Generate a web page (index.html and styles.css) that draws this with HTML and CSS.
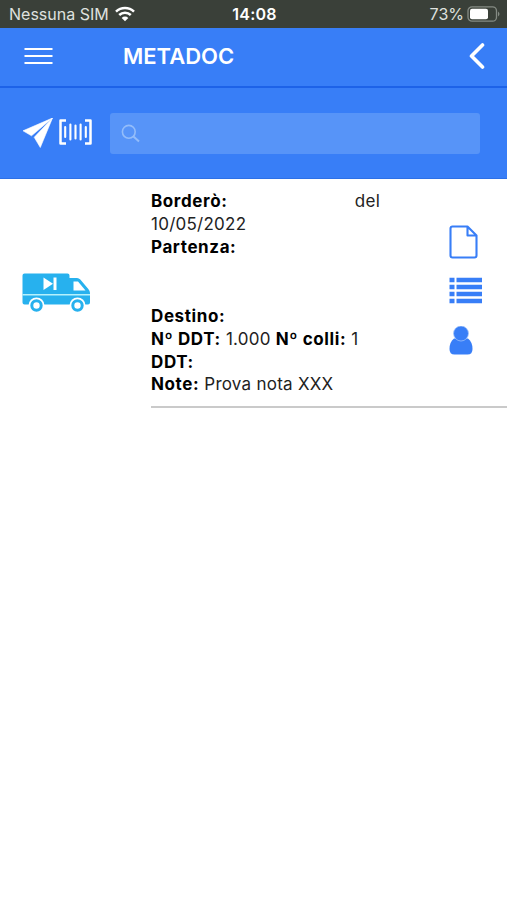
FILE: index.html
```html
<!DOCTYPE html>
<html lang="it">
<head>
  <meta charset="UTF-8" />
  <meta name="viewport" content="width=device-width, initial-scale=1.0"/>
  <title>METADOC</title>
  <link rel="stylesheet" href="styles.css">
</head>
<body>
  <div class="status-bar">
    <div class="carrier">
      <span>Nessuna SIM</span>
      <svg class="wifi" width="20" height="16" viewBox="0 0 20 16">
        <path d="M1 5.600a13 13 0 0 1 18 0M4.200 9a8.400 8.400 0 0 1 11.600 0" fill="none" stroke="#fff" stroke-width="2.500"/>
        <path d="M10 15.200l-3.300-3.300a4.700 4.700 0 0 1 6.600 0z" fill="#fff"/>
      </svg>
    </div>
    <div class="time">14:08</div>
    <div class="battery">
      <span>73%</span>
      <svg width="33" height="16" viewBox="0 0 33 16">
        <rect x="1" y=".8" width="28.500" height="14.400" rx="4" fill="none" stroke="#858b84" stroke-width="1.300"/>
        <rect x="3" y="2.800" width="18" height="10.400" rx="2" fill="#fff"/>
        <path d="M31 5.500q3 2.500 0 5z" fill="#858b84"/>
      </svg>
    </div>
  </div>

  <header class="header">
    <button class="icon-button">
      <svg width="29" height="18" viewBox="0 0 29 18">
        <path d="M.5 2h28M.5 9h28M.5 16h28" stroke="#fff" stroke-width="2.200"/>
      </svg>
    </button>
    <h1>METADOC</h1>
    <button class="icon-button">
      <svg width="16" height="28" viewBox="0 0 16 28">
        <path d="M13.500 3L2.500 14l11 11" fill="none" stroke="#fff" stroke-width="3.600" stroke-linecap="round" stroke-linejoin="round"/>
      </svg>
    </button>
  </header>

  <div class="toolbar">
    <svg class="send" width="30" height="30" viewBox="0 0 30 30">
      <path d="M29.500 0L0 12.800l8.500 5zM29.500 0L11.200 19.300 17.300 29.500z" fill="#fff" stroke="#fff" stroke-width=".6" stroke-linejoin="round"/>
    </svg>
    <svg class="barcode" width="33" height="26" viewBox="0 0 33 26">
      <path d="M7 1.500H1.500v23H7M26 1.500h5.500v23H26" fill="none" stroke="#fff" stroke-width="2.500" stroke-linejoin="round"/>
      <path d="M6.200 8v10M11.400 5.500v15M16.500 6.500v13M21.600 5.500v15M26.800 8v10" stroke="#fff" stroke-width="2.100" stroke-linecap="round"/>
    </svg>
    <div class="search-box">
      <svg width="20" height="20" viewBox="0 0 20 20">
        <circle cx="7.800" cy="7.800" r="6.400" fill="none" stroke="#94bdfa" stroke-width="1.600"/>
        <path d="M12.500 12.500l5.500 5" stroke="#94bdfa" stroke-width="2"/>
      </svg>
      <input type="text" aria-label="Cerca">
    </div>
  </div>

  <div class="item">
    <div class="item-vehicle">
      <svg width="69" height="42" viewBox="0 0 69 42">
        <path d="M2.500 1.500h43q2 0 2 2V6h7.500q2 0 3.300 1.500l8 9.500q1.700 2 1.700 4V30.500q0 2-2 2H2.500q-2 0-2-2v-27q0-2 2-2z" fill="#27b1ee"/>
        <path d="M51.500 9.500h4.500l7.500 9h-12z" fill="#fff"/>
        <path d="M21.500 5.500v12.500l9.500-6.200z" fill="#fff"/>
        <path d="M33 5.500v12.500" stroke="#fff" stroke-width="3"/>
        <path d="M.5 22.700H68" stroke="#b5f1fc" stroke-width="1.500"/>
        <circle cx="14.500" cy="33.500" r="8" fill="#fff"/>
        <circle cx="55.500" cy="33.500" r="8" fill="#fff"/>
        <circle cx="14.500" cy="33.500" r="4.700" fill="none" stroke="#27b1ee" stroke-width="3"/>
        <circle cx="55.500" cy="33.500" r="4.700" fill="none" stroke="#27b1ee" stroke-width="3"/>
      </svg>
    </div>

    <div class="item-content">
      <div class="item-text">
        <p class="bordero"><strong>Borderò:</strong><span class="del">del</span></p>
        <p>10/05/2022</p>
        <p class="partenza"><strong>Partenza:</strong></p>
        <p><strong>Destino:</strong></p>
        <p><strong>Nº DDT:</strong> 1.000 <strong>Nº colli:</strong> 1</p>
        <p><strong>DDT:</strong></p>
        <p><strong>Note:</strong> Prova nota XXX</p>
      </div>

      <div class="item-actions">
        <svg width="30" height="34" viewBox="0 0 30 34">
          <path d="M3.500 1.500H18.500l9 9v20q0 2-2 2h-22q-2 0-2-2v-27q0-2 2-2zM18.500 1.500v9h9" fill="none" stroke="#387ef7" stroke-width="2.100" stroke-linejoin="round"/>
        </svg>
        <svg width="34" height="27" viewBox="0 0 34 27">
          <path d="M.5 3h5M.5 10h5M.5 17h5M.5 24h5M7.500 3H33M7.500 10H33M7.500 17H33M7.500 24H33" stroke="#387ef7" stroke-width="4.400"/>
        </svg>
        <svg class="user" width="24" height="29" viewBox="0 0 24 29">
          <path d="M5 12.500h14q4.500 3.500 4.500 10.500 0 5.500-5 5.500h-13q-5 0-5-5.500 0-7 4.500-10.500z" fill="#387ef7"/>
          <circle cx="12" cy="7.500" r="7.500" fill="#387ef7" stroke="#a9c8fb" stroke-width=".7"/>
        </svg>
      </div>
    </div>
  </div>
</body>
</html>
```

FILE: styles.css
```css
* {
  box-sizing: border-box;
}

body {
  margin: 0;
  background-color: #fff;
  color: #222;
  font-family: Inter, "Liberation Sans", sans-serif;
  font-size: 17px;
}

svg {
  display: block;
  flex: none;
}

.status-bar {
  display: grid;
  grid-template-columns: 1fr auto 1fr;
  align-items: center;
  height: 28px;
  padding: 0 7px 0 9px;
  background-color: #3a4039;
  color: #dfe1df;
  font-size: 16px;
}

.carrier,
.battery {
  display: flex;
  align-items: center;
}

.carrier {
  gap: 6px;
}

.battery {
  justify-content: flex-end;
  gap: 3px;
}

.time {
  color: #fff;
  font-weight: 600;
  letter-spacing: 0.2px;
}

.header {
  display: flex;
  align-items: center;
  height: 60px;
  padding: 0 22px 2px 24px;
  background-color: #387ef7;
  border-bottom: 2px solid #1d62e8;
}

.header h1 {
  flex: 1;
  margin: 0 0 0 70px;
  color: #fff;
  font-size: 22px;
  font-weight: 600;
}

.icon-button {
  padding: 0;
  background: none;
  border: none;
  cursor: pointer;
}

.toolbar {
  display: flex;
  align-items: center;
  height: 91px;
  padding: 0 27px 0 23px;
  background-color: #387ef7;
  border-bottom: 1px solid #2d70e6;
}

.barcode {
  margin: 0 0 2px 6px;
}

.send {
  margin-bottom: 1px;
}

.search-box {
  display: flex;
  flex: 1;
  align-items: center;
  height: 41px;
  margin-left: 18px;
  padding: 2px 0 0 11px;
  background-color: #5794f8;
  border-radius: 3px;
}

.search-box input {
  flex: 1;
  min-width: 0;
  background: none;
  border: none;
  outline: none;
  color: #fff;
  font: inherit;
}

.item {
  display: flex;
  align-items: center;
}

.item-vehicle {
  width: 151px;
  padding: 0 0 2px 22px;
}

.item-content {
  display: flex;
  flex: 1;
  justify-content: space-between;
  padding: 11px 24px 10px 0;
  border-bottom: 2px solid #cacaca;
}

.item-text {
  width: 240px;
  letter-spacing: 0.25px;
  line-height: 22.9px;
}

.item-text p {
  margin: 0;
}

.item-text .partenza {
  margin-bottom: 46px;
}

.item-text strong {
  color: #000;
  font-weight: 700;
  letter-spacing: 0.6px;
}

.bordero {
  display: flex;
  justify-content: space-between;
  padding-right: 11px;
}

.item-actions {
  display: flex;
  flex-direction: column;
  width: 34px;
  gap: 18px;
  padding-top: 35px;
}

.user {
  margin-top: 4px;
}
```
